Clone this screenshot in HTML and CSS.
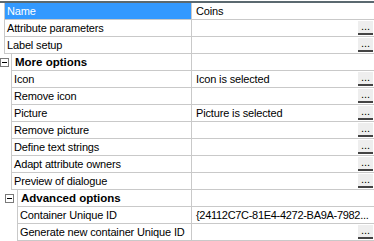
FILE: index.html
```html
<!DOCTYPE html>
<html>
<head>
<meta charset="utf-8">
<title>Properties</title>
<link rel="stylesheet" href="styles.css">
</head>
<body>
<div class="grid">
	<div class="row sel"><div class="left"><div class="gut"></div><div class="key">Name</div></div><div class="val">Coins</div></div>
	<div class="row"><div class="left"><div class="gut"></div><div class="key">Attribute parameters</div></div><div class="val"><span class="txt"></span><span class="btn">...</span></div></div>
	<div class="row"><div class="left"><div class="gut"></div><div class="key">Label setup</div></div><div class="val"><span class="txt"></span><span class="btn">...</span></div></div>

	<div class="row lvl1 cat"><div class="left"><div class="gut"><span class="toggle"></span></div><div class="key">More options</div></div><div class="val"></div></div>
	<div class="row lvl1"><div class="left"><div class="gut"></div><div class="key">Icon</div></div><div class="val"><span class="txt">Icon is selected</span><span class="btn">...</span></div></div>
	<div class="row lvl1"><div class="left"><div class="gut"></div><div class="key">Remove icon</div></div><div class="val"><span class="txt"></span><span class="btn">...</span></div></div>
	<div class="row lvl1"><div class="left"><div class="gut"></div><div class="key">Picture</div></div><div class="val"><span class="txt">Picture is selected</span><span class="btn">...</span></div></div>
	<div class="row lvl1"><div class="left"><div class="gut"></div><div class="key">Remove picture</div></div><div class="val"><span class="txt"></span><span class="btn">...</span></div></div>
	<div class="row lvl1"><div class="left"><div class="gut"></div><div class="key">Define text strings</div></div><div class="val"><span class="txt"></span><span class="btn">...</span></div></div>
	<div class="row lvl1"><div class="left"><div class="gut"></div><div class="key">Adapt attribute owners</div></div><div class="val"><span class="txt"></span><span class="btn">...</span></div></div>
	<div class="row lvl1"><div class="left"><div class="gut"></div><div class="key">Preview of dialogue</div></div><div class="val"><span class="txt"></span><span class="btn">...</span></div></div>

	<div class="row lvl2 cat"><div class="left"><div class="gut"><span class="toggle"></span></div><div class="key">Advanced options</div></div><div class="val"></div></div>
	<div class="row lvl2"><div class="left"><div class="gut"></div><div class="key">Container Unique ID</div></div><div class="val"><span class="txt guid">{24112C7C-81E4-4272-BA9A-7982...</span></div></div>
	<div class="row lvl2"><div class="left"><div class="gut"></div><div class="key">Generate new container Unique ID</div></div><div class="val"><span class="txt"></span><span class="btn">...</span></div></div>
</div>
</body>
</html>
```
FILE: styles.css
```css
body { margin: 0; padding: 0; background: #fff; font-family: "Liberation Sans", Arial, sans-serif; font-size: 11px; letter-spacing: -0.15px; color: #000; }

.grid { margin-top: 1px; border-top: 2px solid #5b6970; width: 374px; }
.row { display: flex; height: 17px; }
.left { display: flex; width: 191px; flex: none; }
.gut { flex: none; width: 4px; display: flex; align-items: center; }
.lvl1 .gut { width: 11px; }
.lvl2 .gut { width: 17px; }
.key { flex: 1; box-sizing: border-box; border-left: 1px solid #c9c9c9; border-bottom: 1px solid #c9c9c9; padding-left: 2px; line-height: 16px; white-space: nowrap; overflow: hidden; }
.val { flex: 1; display: flex; align-items: center; justify-content: space-between; box-sizing: border-box; border-left: 1px solid #c9c9c9; border-bottom: 1px solid #c9c9c9; padding-left: 4px; padding-right: 1px; white-space: nowrap; overflow: hidden; }
.txt { line-height: 16px; }
.guid { letter-spacing: -0.3px; }

.sel .key { background: #3399ff; color: #fff; }
.cat .key { font-weight: bold; font-size: 11.5px; letter-spacing: 0; padding-left: 3px; }

.btn { flex: none; align-self: flex-end; width: 15px; height: 12px; margin-bottom: 1px; background: #eeeeee; border-bottom: 2px solid #444; font-size: 11px; line-height: 10px; text-align: center; letter-spacing: 0; }

.toggle { flex: none; position: relative; width: 7px; height: 7px; border: 1px solid #7a7a7a; background: #fff; }
.lvl2 .toggle { margin-left: 5px; }
.toggle:after { content: ""; position: absolute; left: 1px; top: 3px; width: 5px; height: 1px; background: #000; }
```
